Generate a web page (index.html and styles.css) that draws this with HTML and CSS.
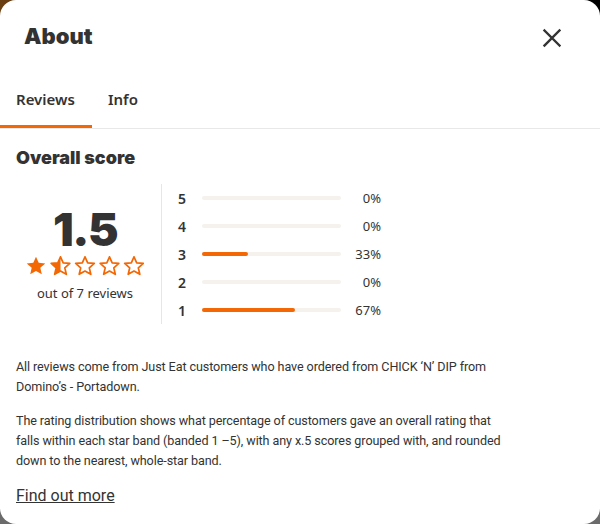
FILE: index.html
```html
<!DOCTYPE html>
<html>
<head>
<meta charset="utf-8">
<link rel="stylesheet" href="styles.css">
</head>
<body>
<div class="card">
  <header class="head">
    <h1 class="title">About</h1>
    <button class="close" aria-label="Close">
      <svg width="20" height="20" viewBox="0 0 20 20"><path d="M2.5 2.5L17.5 17.5M17.5 2.5L2.5 17.5" stroke="#333" stroke-width="2.4" stroke-linecap="square"/></svg>
    </button>
  </header>
  <nav class="tabs">
    <div class="tab active">Reviews</div>
    <div class="tab">Info</div>
  </nav>
  <section class="body">
    <h2 class="sub">Overall score</h2>
    <div class="score">
      <div class="summary">
        <div class="big">1.5</div>
        <div class="stars">
          <svg width="118" height="20" viewBox="0 0 118 20">
            <defs>
              <path id="st" d="M10 0.8l2.7 6 6.6.6-5 4.4 1.5 6.5L10 15 4.2 18.3l1.5-6.5-5-4.4 6.6-.6z"/>
              <clipPath id="half"><rect x="0" y="0" width="10" height="20"/></clipPath>
            </defs>
            <use href="#st" x="0" fill="#f36805"/>
            <g transform="translate(24.5 0)">
              <use href="#st" fill="#f36805" clip-path="url(#half)"/>
              <use href="#st" fill="none" stroke="#f36805" stroke-width="1.7" stroke-linejoin="round"/>
            </g>
            <use href="#st" x="49" fill="none" stroke="#f36805" stroke-width="1.7" stroke-linejoin="round"/>
            <use href="#st" x="73.5" fill="none" stroke="#f36805" stroke-width="1.7" stroke-linejoin="round"/>
            <use href="#st" x="98" fill="none" stroke="#f36805" stroke-width="1.7" stroke-linejoin="round"/>
          </svg>
        </div>
        <div class="count">out of 7 reviews</div>
      </div>
      <div class="dist">
        <div class="row"><span class="num">5</span><span class="bar"><span class="fill" style="width:0%"></span></span><span class="pct">0%</span></div>
        <div class="row"><span class="num">4</span><span class="bar"><span class="fill" style="width:0%"></span></span><span class="pct">0%</span></div>
        <div class="row"><span class="num">3</span><span class="bar"><span class="fill" style="width:33%"></span></span><span class="pct">33%</span></div>
        <div class="row"><span class="num">2</span><span class="bar"><span class="fill" style="width:0%"></span></span><span class="pct">0%</span></div>
        <div class="row"><span class="num">1</span><span class="bar"><span class="fill" style="width:67%"></span></span><span class="pct">67%</span></div>
      </div>
    </div>
    <p class="text">All reviews come from Just Eat customers who have ordered from CHICK ‘N’ DIP from Domino’s - Portadown.</p>
    <p class="text">The rating distribution shows what percentage of customers gave an overall rating that falls within each star band (banded 1 –5), with any x.5 scores grouped with, and rounded down to the nearest, whole-star band.</p>
    <a class="more" href="#">Find out more</a>
  </section>
</div>
</body>
</html>
```
FILE: styles.css
```css
* { box-sizing: border-box; }
html, body { margin: 0; padding: 0; }
body {
  width: 600px;
  height: 524px;
  overflow: hidden;
  background:
    linear-gradient(to right, #6a3f12 0%, #2a1a08 50%, #000 100%) top / 100% 50% no-repeat,
    #6b6b6b;
  font-family: Roboto, "Noto Sans", sans-serif;
  color: #333;
}
.card {
  width: 600px;
  height: 524px;
  background: #fff;
  border-radius: 16px;
  overflow: hidden;
}
.head {
  display: flex;
  justify-content: space-between;
  align-items: flex-start;
  padding: 22px 38px 0 24px;
  height: 72px;
}
.title {
  margin: 0;
  font-family: Inter, Lato, sans-serif;
  font-weight: 900;
  font-size: 22px;
  line-height: 28px;
  color: #333;
}
.close {
  border: 0;
  background: none;
  padding: 0;
  margin-top: 6px;
  width: 20px;
  height: 20px;
  display: flex;
}
.tabs {
  display: flex;
  border-bottom: 1px solid #e8e8e8;
  height: 57px;
}
.tab {
  font-family: "Noto Sans", sans-serif;
  font-size: 15px;
  font-weight: 600;
  color: #333;
  padding: 17px 16px 0;
  height: 56px;
}
.tab.active {
  border-bottom: 3px solid #f36805;
  width: 92px;
}
.body {
  padding: 0 16px;
}
.sub {
  margin: 18px 0 0;
  font-family: Inter, Lato, sans-serif;
  font-weight: 900;
  font-size: 18px;
  line-height: 22px;
  color: #333;
}
.score {
  display: flex;
  align-items: center;
  margin-top: 15px;
}
.summary {
  width: 138px;
  display: flex;
  flex-direction: column;
  align-items: center;
  margin-right: 7px;
}
.big {
  font-family: Inter, Lato, sans-serif;
  font-weight: 900;
  font-size: 46px;
  line-height: 46px;
  color: #333;
  letter-spacing: -1.5px;
}
.stars {
  display: flex;
  margin-top: 4px;
  height: 20px;
}
.count {
  font-family: "Noto Sans", sans-serif;
  font-size: 13px;
  line-height: 18px;
  margin-top: 8px;
  color: #333;
}
.dist {
  border-left: 1px solid #e6e6e6;
  padding: 0 0 0 16px;
  display: flex;
  flex-direction: column;
}
.row {
  display: flex;
  align-items: center;
  height: 28px;
}
.num {
  width: 24px;
  font-family: "Noto Sans", sans-serif;
  font-size: 14px;
  font-weight: 600;
  color: #333;
}
.bar {
  width: 139px;
  height: 4px;
  border-radius: 2px;
  background: #f5f2ee;
  display: flex;
}
.fill {
  height: 4px;
  border-radius: 2px;
  background: #f36805;
}
.pct {
  width: 40px;
  text-align: right;
  font-family: "Noto Sans", sans-serif;
  font-size: 13px;
  color: #333;
}
.text {
  margin: 33px 0 0;
  max-width: 492px;
  font-size: 12.6px;
  line-height: 20px;
  letter-spacing: -0.1px;
  color: #333;
}
.text + .text {
  margin-top: 14px;
}
.more {
  display: inline-block;
  margin-top: 15px;
  font-size: 16px;
  line-height: 20px;
  color: #333;
  text-decoration: underline;
}
```
